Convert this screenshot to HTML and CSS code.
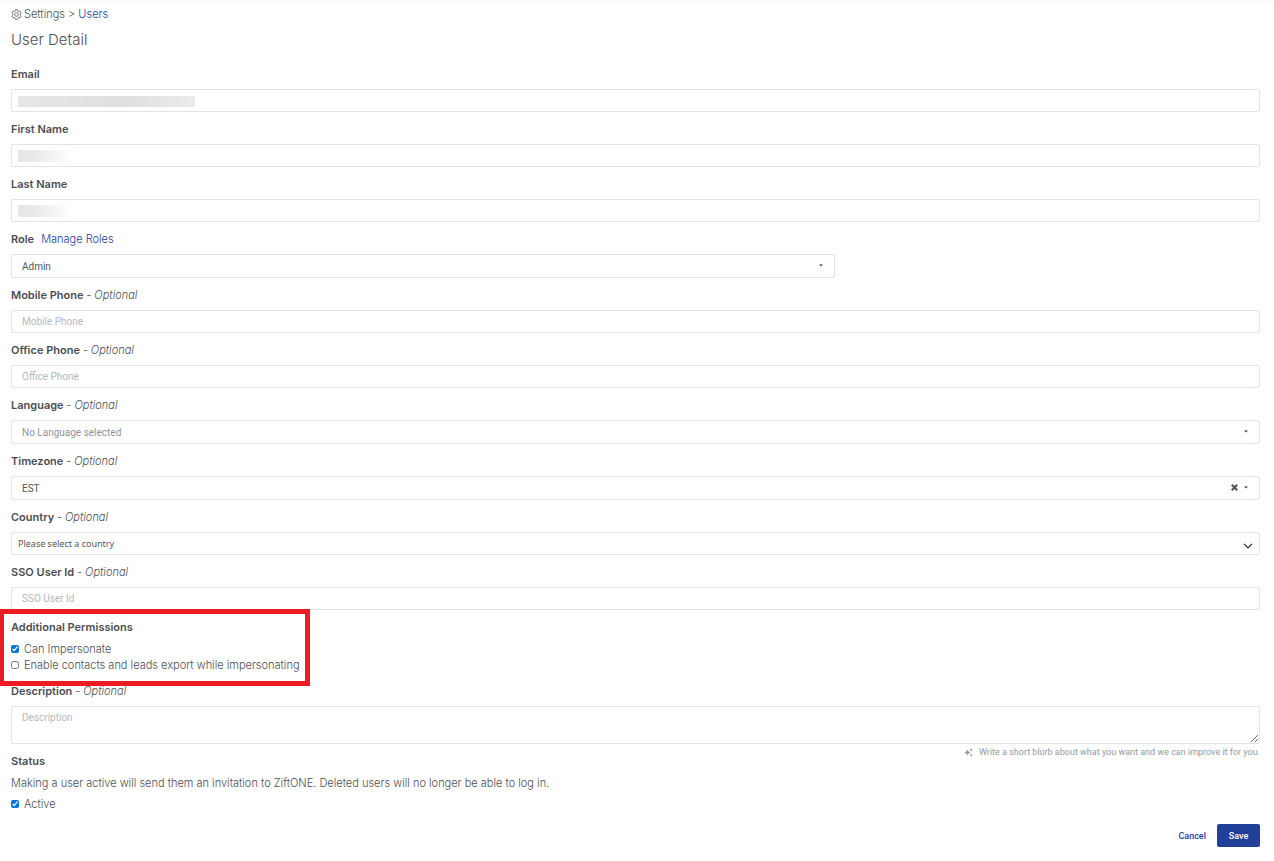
FILE: index.html
```html
<!DOCTYPE html>
<html lang="en">
<head>
  <meta charset="UTF-8" />
  <title>User Detail</title>
  <meta name="viewport" content="width=device-width, initial-scale=1.0" />
  <link rel="stylesheet" href="styles.css">
</head>
<body>
  <main class="page">
    <nav class="breadcrumb">
      <svg class="gear" viewBox="0 0 24 24" fill="none" stroke="currentColor" stroke-width="1.6" stroke-linejoin="round">
        <path d="M9.600 1.500h4.800l.7 3 1.700 1 2.900-.9 2.400 4.100-2.200 2.100v2.400l2.200 2.100-2.400 4.100-2.900-.9-1.700 1-.7 3H9.600l-.7-3-1.700-1-2.900.9-2.400-4.100 2.200-2.100v-2.400L1.900 8.700l2.400-4.100 2.900.9 1.700-1z"/>
        <circle cx="12" cy="12" r="4"/>
      </svg>
      <span>Settings &gt; <a href="#">Users</a></span>
    </nav>
    <h1>User Detail</h1>

    <form>
      <div class="field">
        <label for="email">Email</label>
        <input type="text" id="email" class="control masked masked-long">
      </div>
      <div class="field">
        <label for="firstName">First Name</label>
        <input type="text" id="firstName" class="control masked">
      </div>
      <div class="field">
        <label for="lastName">Last Name</label>
        <input type="text" id="lastName" class="control masked">
      </div>
      <div class="field">
        <div class="label-row">
          <label for="role">Role</label>
          <a href="#">Manage Roles</a>
        </div>
        <div class="combo combo-short">
          <select id="role" class="control">
            <option>Admin</option>
          </select>
          <svg class="caret" viewBox="0 0 4 2"><path d="M0 0h4L2 2z"/></svg>
        </div>
      </div>
      <div class="field">
        <label for="mobile">Mobile Phone <i>- Optional</i></label>
        <input type="text" id="mobile" class="control" placeholder="Mobile Phone">
      </div>
      <div class="field">
        <label for="office">Office Phone <i>- Optional</i></label>
        <input type="text" id="office" class="control" placeholder="Office Phone">
      </div>
      <div class="field">
        <label for="language">Language <i>- Optional</i></label>
        <div class="combo">
          <select id="language" class="control empty">
            <option>No Language selected</option>
          </select>
          <svg class="caret" viewBox="0 0 4 2"><path d="M0 0h4L2 2z"/></svg>
        </div>
      </div>
      <div class="field">
        <label for="timezone">Timezone <i>- Optional</i></label>
        <div class="combo">
          <select id="timezone" class="control">
            <option>EST</option>
          </select>
          <button type="button" class="clear" aria-label="Clear timezone">
            <svg viewBox="0 0 7 7" stroke="currentColor" stroke-width="2.200"><path d="M.8.8l5.400 5.400M6.200.8L.8 6.200"/></svg>
          </button>
          <svg class="caret" viewBox="0 0 4 2"><path d="M0 0h4L2 2z"/></svg>
        </div>
      </div>
      <div class="field">
        <label for="country">Country <i>- Optional</i></label>
        <div class="combo native">
          <select id="country" class="control">
            <option>Please select a country</option>
          </select>
          <svg class="chevron" viewBox="0 0 10 6" fill="none" stroke="currentColor" stroke-width="1.200"><path d="M1 .8l4 4 4-4"/></svg>
        </div>
      </div>
      <div class="field">
        <label for="sso">SSO User Id <i>- Optional</i></label>
        <input type="text" id="sso" class="control" placeholder="SSO User Id">
      </div>

      <div class="permissions">
        <h2>Additional Permissions</h2>
        <label class="check"><input type="checkbox" checked> Can Impersonate</label>
        <label class="check"><input type="checkbox"> Enable contacts and leads export while impersonating</label>
      </div>

      <div class="field description">
        <label for="description">Description <i>- Optional</i></label>
        <textarea id="description" class="control" placeholder="Description"></textarea>
      </div>

      <div class="status-row">
        <h2>Status</h2>
        <p class="hint">
          <svg viewBox="0 0 24 24" fill="currentColor">
            <path d="M9 4l2.800 5.200L17 12l-5.200 2.800L9 20l-2.800-5.200L1 12l5.200-2.800z"/>
            <path d="M19 1l1.500 2.500L23 5l-2.500 1.500L19 9l-1.500-2.500L15 5l2.500-1.500zM19 15l1.500 2.500L23 19l-2.500 1.500L19 23l-1.500-2.500L15 19l2.500-1.500z"/>
          </svg>
          Write a short blurb about what you want and we can improve it for you.
        </p>
      </div>
      <p class="status-text">Making a user active will send them an invitation to ZiftONE. Deleted users will no longer be able to log in.</p>
      <label class="check"><input type="checkbox" checked> Active</label>

      <div class="actions">
        <button type="button" class="cancel">Cancel</button>
        <button type="submit" class="save">Save</button>
      </div>
    </form>
  </main>
</body>
</html>
```
FILE: styles.css
```css
* { box-sizing: border-box; }

body {
  margin: 0;
  background: linear-gradient(#f7f7f7, #fff 4px) no-repeat #fff;
  color: #4c4e53;
  font-family: Inter, 'Liberation Sans', sans-serif;
  font-size: 11px;
  font-weight: 300;
  line-height: 16px;
}

a {
  color: #21409a;
  text-decoration: none;
}

p, h1, h2 { margin: 0; }

.page {
  padding: 6px 14px 14px 11px;
}

.breadcrumb {
  display: flex;
  align-items: center;
  gap: 2px;
}

.gear {
  width: 11px;
  height: 11px;
}

h1 {
  margin: 7px 0 16px;
  font-size: 15px;
  font-weight: 300;
  line-height: 21px;
}

h2, .field label {
  font-size: 11px;
  font-weight: 600;
}

.field {
  display: flex;
  flex-direction: column;
  gap: 7px;
  margin-bottom: 9px;
}

.field i { font-weight: 300; }

.label-row {
  display: flex;
  gap: 7px;
}

.control {
  width: 100%;
  height: 23px;
  padding: 0 10px;
  border: 1px solid #dce6e6;
  border-radius: 2px;
  background-color: #fff;
  color: #54565b;
  font-family: Roboto, 'Liberation Sans', sans-serif;
  font-size: 10px;
}

.control::placeholder { color: #b4b8c2; }

.masked {
  background-image: linear-gradient(to right, #e6e6e6, #ebebeb 35%, #fff);
  background-position: 6px 5px;
  background-size: 54px 12px;
  background-repeat: no-repeat;
}

.masked-long {
  background-image: linear-gradient(to right, #e6e6e6, #dfdfdf 60%, #ebebed);
  background-position: 6px 6px;
  background-size: 177px 11px;
}

.combo {
  display: flex;
  position: relative;
}

.combo-short { width: 66%; }

.combo select {
  height: 24px;
  appearance: none;
}

.combo .empty { color: #8d9599; }

.native select {
  height: 23px;
  padding: 0 6px;
  font-family: 'Noto Sans', sans-serif;
  font-size: 9px;
}

.caret {
  position: absolute;
  top: 10px;
  right: 12px;
  width: 4px;
  height: 3px;
  fill: #444;
}

.clear {
  position: absolute;
  top: 8px;
  right: 22px;
  width: 7px;
  height: 7px;
  padding: 0;
  border: 0;
  background: none;
  color: #54565b;
}

.clear svg { display: block; }

.chevron {
  position: absolute;
  top: 11px;
  right: 7px;
  width: 10px;
  height: 6px;
  color: #222;
}

/* red frame around the permission options */
.permissions {
  position: relative;
  width: fit-content;
  margin-bottom: 10px;
}

.permissions::after {
  content: "";
  position: absolute;
  inset: -10px -10px -13px -12px;
  border: 5px solid #ed1c24;
  pointer-events: none;
}

.permissions h2 { margin-bottom: 6px; }

.check {
  display: flex;
  align-items: center;
  gap: 5px;
}

.check input {
  width: 8px;
  height: 8px;
  margin: 0;
  accent-color: #0075d7;
}

.description { margin-bottom: 0; }

textarea.control {
  display: block;
  height: 38px;
  padding: 5px 10px;
  line-height: 12px;
  resize: vertical;
}

.status-row {
  display: flex;
  justify-content: space-between;
}

.status-row h2 { padding-top: 9px; }

.hint {
  display: flex;
  align-items: center;
  height: 16px;
  gap: 6px;
  color: #8f9c9f;
  font-family: Roboto, 'Liberation Sans', sans-serif;
  font-size: 9px;
  font-weight: 400;
}

.hint svg {
  width: 9px;
  height: 9px;
}

.status-text { margin: 6px 0 5px; }

.actions {
  display: flex;
  justify-content: flex-end;
  margin-top: 12px;
}

.actions button {
  height: 23px;
  padding: 0 11px;
  border: 0;
  border-radius: 2px;
  background: none;
  color: #21409a;
  font-family: Roboto, 'Liberation Sans', sans-serif;
  font-size: 9px;
  font-weight: 500;
  cursor: pointer;
}

.actions .save {
  min-width: 43px;
  background: #21409a;
  color: #fff;
}
```
